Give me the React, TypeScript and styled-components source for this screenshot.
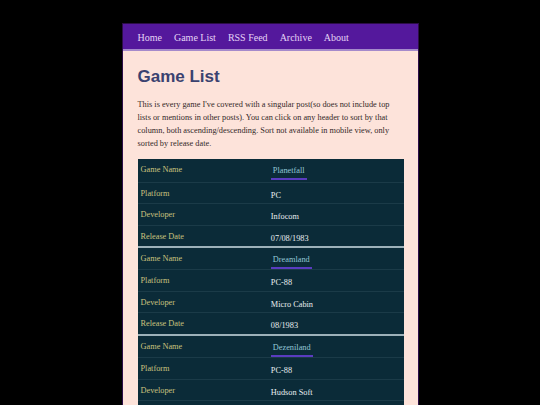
import React from 'react';
import styled, { createGlobalStyle } from 'styled-components';

const GlobalStyle = createGlobalStyle`
  html, body {
    margin: 0;
    padding: 0;
    background: #000;
  }
`;

const Page = styled.div`
  width: 297px;
  margin: 23px auto 0;
  box-sizing: border-box;
  border: 1px solid #2c0d48;
  border-bottom: none;
  background-color: #fde3da;
  min-height: 390px;
  font-family: "Liberation Serif", "Times New Roman", serif;
`;

const NavBar = styled.nav`
  height: 24px;
  background-color: #54189c;
  border-bottom: 2px solid #a58acb;
  display: flex;
  align-items: center;
  gap: 12px;
  padding: 1px 0 0 15px;
`;

const NavLink = styled.a`
  color: #e4d4f6;
  font-size: 10px;
  text-decoration: none;
`;

const Content = styled.main`
  padding: 16px 14px 0 15px;
`;

const Title = styled.h1`
  margin: 0 0 11px;
  font-family: "Liberation Sans", Arial, sans-serif;
  font-size: 17px;
  line-height: 20px;
  color: #3a4270;
`;

const Intro = styled.p`
  margin: 0 0 9px;
  font-size: 8.3px;
  line-height: 13px;
  color: #342828;
`;

const GameTable = styled.table`
  width: 100%;
  border-collapse: collapse;
  background-color: #0b2b38;
  font-size: 8.3px;
  line-height: 12px;
`;

const Group = styled.tbody`
  & + & tr:first-child td {
    border-top: 2px solid #9db1b9;
  }
`;

const Cell = styled.td<{ $tall?: boolean; $value?: boolean }>`
  box-sizing: border-box;
  height: ${p => (p.$tall ? 23 : 21.6)}px;
  width: ${p => (p.$value ? 51 : 49)}%;
  padding: ${p => (p.$value ? (p.$tall ? 5 : 7) : 5)}px 3px 0;
  vertical-align: top;
  border-bottom: 1px solid #1b3b48;
  color: ${p => (p.$value ? '#e9eef0' : '#c9c27e')};
`;

const GameLink = styled.a`
  display: inline-block;
  padding: 1px 2px 1px;
  color: #93c6d6;
  text-decoration: none;
  border-bottom: 2px solid #5a3cc0;
`;

type Game = {
  name: string;
  platform: string;
  developer: string;
  released: string;
};

const games: Game[] = [
  { name: 'Planetfall', platform: 'PC', developer: 'Infocom', released: '07/08/1983' },
  { name: 'Dreamland', platform: 'PC-88', developer: 'Micro Cabin', released: '08/1983' },
  { name: 'Dezeniland', platform: 'PC-88', developer: 'Hudson Soft', released: '1983' },
];

const App = () => {
  return (
    <>
      <GlobalStyle />
      <Page>
        <NavBar>
          <NavLink href="#">Home</NavLink>
          <NavLink href="#">Game List</NavLink>
          <NavLink href="#">RSS Feed</NavLink>
          <NavLink href="#">Archive</NavLink>
          <NavLink href="#">About</NavLink>
        </NavBar>
        <Content>
          <Title>Game List</Title>
          <Intro>
            This is every game I've covered with a singular post(so does not include top lists or
            mentions in other posts). You can click on any header to sort by that column, both
            ascending/descending. Sort not available in mobile view, only sorted by release date.
          </Intro>
          <GameTable>
            {games.map(game => (
              <Group key={game.name}>
                <tr>
                  <Cell $tall>Game Name</Cell>
                  <Cell $tall $value>
                    <GameLink href="#">{game.name}</GameLink>
                  </Cell>
                </tr>
                <tr>
                  <Cell>Platform</Cell>
                  <Cell $value>{game.platform}</Cell>
                </tr>
                <tr>
                  <Cell>Developer</Cell>
                  <Cell $value>{game.developer}</Cell>
                </tr>
                <tr>
                  <Cell>Release Date</Cell>
                  <Cell $value>{game.released}</Cell>
                </tr>
              </Group>
            ))}
          </GameTable>
        </Content>
      </Page>
    </>
  );
};

export default App;
